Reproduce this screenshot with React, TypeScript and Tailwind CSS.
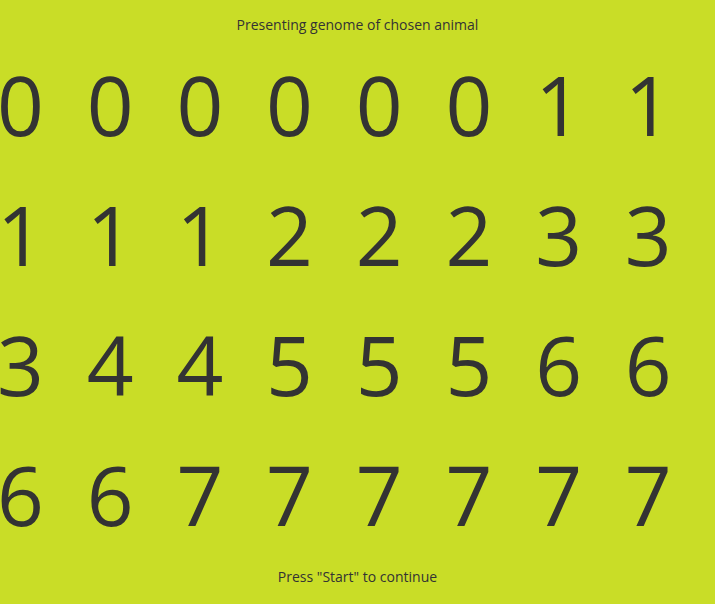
import React from 'react'

const genome = [0, 0, 0, 0, 0, 0, 1, 1, 1, 1, 1, 2, 2, 2, 3, 3, 3, 4, 4, 5, 5, 5, 6, 6, 6, 6, 7, 7, 7, 7, 7, 7]

const App = () => {
	return (
		<div className='w-[715px] h-[604px] bg-[#c9dd27] text-[#333333] font-["Open_Sans","Noto_Sans",sans-serif] flex flex-col overflow-hidden'>
			{/*Header*/}
			<p className='text-center text-[14px] pt-[15px] leading-[20px]'>Presenting genome of chosen animal</p>

			{/*Genome grid*/}
			<div className='grid grid-cols-[repeat(8,89.7px)] mt-[4px] -ml-[3px]'>
				{genome.map((g, i) => (
					<span key={i} className='text-[82px] leading-[130px] h-[130px]'>{g}</span>
				))}
			</div>

			{/*Footer*/}
			<p className='text-center text-[14px] leading-[20px] mt-[8px]'>Press "Start" to continue</p>
		</div>
	)
}

export default App
